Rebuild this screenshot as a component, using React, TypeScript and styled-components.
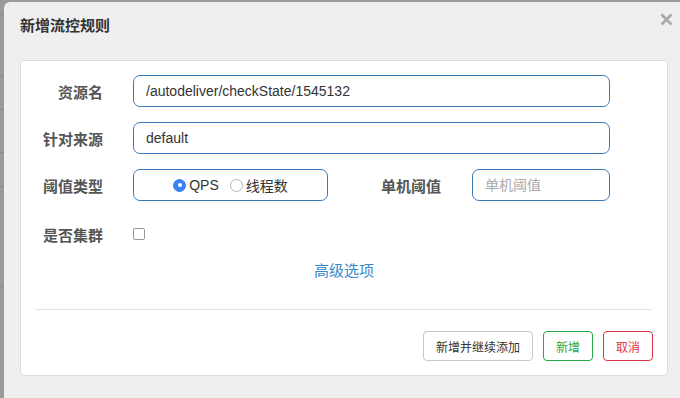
import styled, { createGlobalStyle } from 'styled-components'

const GlobalStyle = createGlobalStyle`
  html, body {
    margin: 0;
    padding: 0;
    background: #9a9a9a;
    font-family: "Liberation Sans", "Noto Sans CJK SC", sans-serif;
  }
  * { box-sizing: border-box; }
`

const Page = styled.div`
  display: flex;
  width: 680px;
  height: 398px;
  overflow: hidden;
`

const Backdrop = styled.div`
  width: 4px;
  flex: none;
  display: flex;
  flex-direction: column;
`

const BackdropRow = styled.div<{ $h: number }>`
  height: ${p => p.$h}px;
  border-bottom: 1px solid #8a8a8a;
`

const Dialog = styled.div`
  flex: 1;
  margin-top: 2px;
  background: #efefef;
  border-top-left-radius: 6px;
  display: flex;
  flex-direction: column;
`

const Header = styled.div`
  height: 58px;
  display: flex;
  align-items: center;
  justify-content: space-between;
  padding: 0 6px 14px 16px;
`

const Title = styled.h4`
  margin: 0;
  font-size: 15px;
  font-weight: bold;
  color: #333;
`

const Close = styled.button`
  border: none;
  background: none;
  padding: 0;
  width: 16px;
  height: 16px;
  align-self: flex-start;
  margin-top: 9px;
  display: flex;
  align-items: center;
  justify-content: center;
`

const Panel = styled.div`
  margin: 0 12px 0 16px;
  background: #fff;
  border: 1px solid #dcdcdc;
  border-radius: 4px;
  padding: 14px 57px 0 0;
  height: 316px;
  display: flex;
  flex-direction: column;
`

const Form = styled.div`
  display: grid;
  grid-template-columns: 82px 1fr;
  column-gap: 30px;
  row-gap: 15px;
  align-items: center;
`

const Label = styled.label`
  text-align: right;
  font-size: 15px;
  font-weight: bold;
  color: #555;
`

const Input = styled.input`
  height: 32px;
  width: 100%;
  border: 1px solid #3c7bbb;
  border-radius: 7px;
  padding: 0 12px;
  font-family: "Liberation Sans", "Noto Sans CJK SC", sans-serif;
  font-size: 14px;
  color: #333;
  outline: none;
  &::placeholder { color: #aaa; }
`

const Split = styled.div`
  display: grid;
  grid-template-columns: 195px 82px 1fr;
  column-gap: 31px;
  align-items: center;
`

const RadioBox = styled.div`
  height: 32px;
  border: 1px solid #3c7bbb;
  border-radius: 7px;
  display: flex;
  align-items: center;
  justify-content: center;
  gap: 11px;
  font-size: 14px;
  color: #333;
`

const RadioOpt = styled.span`
  display: flex;
  align-items: center;
  gap: 3px;
`

const Radio = styled.span<{ $on?: boolean }>`
  width: 13px;
  height: 13px;
  border-radius: 50%;
  border: 1px solid ${p => (p.$on ? '#3b82f6' : '#b5b5b5')};
  background: ${p => (p.$on ? '#3b82f6' : '#fff')};
  display: flex;
  align-items: center;
  justify-content: center;
  &::after {
    content: '';
    width: 4px;
    height: 4px;
    border-radius: 50%;
    background: ${p => (p.$on ? '#fff' : 'transparent')};
  }
`

const CheckRow = styled.div`
  height: 36px;
  display: flex;
  align-items: center;
`

const Check = styled.span`
  width: 12px;
  height: 12px;
  border: 1px solid #9a9a9a;
  border-radius: 2px;
  background: #fff;
`

const Advanced = styled.a`
  display: block;
  text-align: center;
  margin: 9px 0 0 57px;
  font-size: 15px;
  line-height: 20px;
  color: #3a87c9;
  cursor: pointer;
`

const Divider = styled.hr`
  margin: 28px -42px 0 14px;
  border: none;
  border-top: 1px solid #e3e3e3;
`

const Footer = styled.div`
  display: flex;
  justify-content: flex-end;
  gap: 10px;
  margin: 21px -43px 0 0;
`

const Btn = styled.button<{ $tone?: 'ok' | 'cancel' }>`
  height: 30px;
  padding: 0 12px;
  background: #fff;
  border-radius: 4px;
  font-family: "Liberation Sans", "Noto Sans CJK SC", sans-serif;
  font-size: 12px;
  border: 1px solid
    ${p => (p.$tone === 'ok' ? '#28a745' : p.$tone === 'cancel' ? '#dc3545' : '#c8c8c8')};
  color: ${p => (p.$tone === 'ok' ? '#28a745' : p.$tone === 'cancel' ? '#dc3545' : '#333')};
`

export default function App() {
  return (
    <>
      <GlobalStyle />
      <Page>
        <Backdrop>
          {[15, 62, 33, 43, 34, 100].map((h, i) => (
            <BackdropRow key={i} $h={h} />
          ))}
        </Backdrop>
        <Dialog>
          <Header>
            <Title>新增流控规则</Title>
            <Close aria-label="close">
              <svg width="13" height="13" viewBox="0 0 13 13">
                <path d="M1.5 1.5 L11.5 11.5 M11.5 1.5 L1.5 11.5" stroke="#a8a8a8" strokeWidth="2.6" />
              </svg>
            </Close>
          </Header>
          <Panel>
            <Form>
              <Label>资源名</Label>
              <Input defaultValue="/autodeliver/checkState/1545132" />
              <Label>针对来源</Label>
              <Input defaultValue="default" />
              <Label>阈值类型</Label>
              <Split>
                <RadioBox>
                  <RadioOpt><Radio $on />QPS</RadioOpt>
                  <RadioOpt><Radio />线程数</RadioOpt>
                </RadioBox>
                <Label>单机阈值</Label>
                <Input placeholder="单机阈值" />
              </Split>
              <Label>是否集群</Label>
              <CheckRow><Check /></CheckRow>
            </Form>
            <Advanced>高级选项</Advanced>
            <Divider />
            <Footer>
              <Btn>新增并继续添加</Btn>
              <Btn $tone="ok">新增</Btn>
              <Btn $tone="cancel">取消</Btn>
            </Footer>
          </Panel>
        </Dialog>
      </Page>
    </>
  )
}
